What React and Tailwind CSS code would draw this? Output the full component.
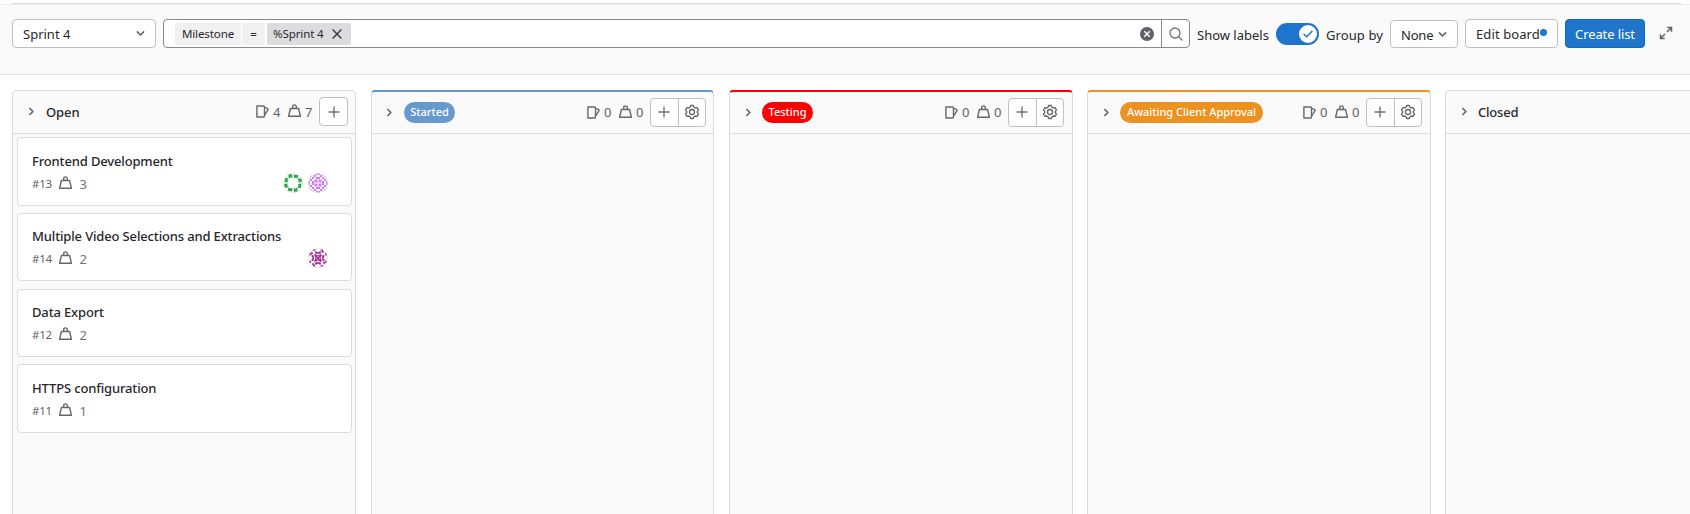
const Chevron = ({ className }) => (
  <svg viewBox="0 0 10 10" className={className} fill="none" stroke="#626168" strokeWidth="1.400" strokeLinecap="round" strokeLinejoin="round">
    <path d="M2.200 3.500 5 6.300 7.800 3.500" />
  </svg>
);

const Issues = () => (
  <svg viewBox="0 0 13 13" className="h-[13px] w-[13px] shrink-0" fill="none" stroke="#68676e" strokeWidth="1.400" strokeLinejoin="round">
    <path d="M.9 1h6.600q1 0 1 1v9q0 1-1 1H.9z" />
    <path d="M8.500 2.400 11.300 3.300Q12.400 3.800 12 4.700L8.700 9.800" />
  </svg>
);

const Weight = () => (
  <svg viewBox="0 0 13 13" className="h-[13px] w-[13px] shrink-0 -translate-y-px" fill="none" stroke="#68676e" strokeWidth="1.400" strokeLinejoin="round">
    <path d="M2.400 4.500h8.200l1.800 7.800H.6z" />
    <path d="M4.700 4.400V2.700q0-1.800 1.800-1.800t1.800 1.800v1.700" />
  </svg>
);

const Plus = () => (
  <svg viewBox="0 0 12 12" className="h-3 w-3" fill="none" stroke="#737278" strokeWidth="1.400">
    <path d="M6 .5v11M.5 6h11" />
  </svg>
);

const Gear = () => (
  <svg viewBox="0 0 16 16" className="h-4 w-4" fill="none" stroke="#626168" strokeWidth="1.300" strokeLinejoin="round">
    <path d="M6.700 1.500h2.600l.7 1.700 1.300.8 1.900-.3 1.300 2.300-1.200 1.400v1.200l1.200 1.400-1.300 2.300-1.900-.3-1.300.8-.7 1.700H6.700L6 12.800 4.700 12l-1.900.3L1.500 10l1.200-1.400V7.400L1.500 6l1.300-2.300 1.900.3L6 3.200z" />
    <circle cx="8" cy="8" r="2.500" />
  </svg>
);

const Green = () => (
  <svg viewBox="0 0 20 20" className="h-5 w-5 rounded-full bg-white">
    <g fill="#2da44e">
      {[0, 90, 180, 270].map((a) => (
        <path key={a} transform={`rotate(${a} 10 10)`} d="M5.200 1 9 .8 9.600 5 7.800 4.200 5.800 5.800zM10.600 1.500 15 2 14.800 5.600 13 4.400 10.900 5.200z" />
      ))}
    </g>
    <circle cx="10" cy="10" r="9.500" fill="none" stroke="#dedede" />
  </svg>
);

const dots = [];
for (let r = 0; r < 10; r++) {
  for (let c = 0; c < 10; c++) {
    const inner = r > 2 && r < 7 && c > 2 && c < 7;
    if (!inner && (Math.min(r, 9 - r) + Math.min(c, 9 - c)) % 2 === 0) dots.push([c * 2, r * 2]);
  }
}

const Violet = () => (
  <svg viewBox="0 0 20 20" className="h-5 w-5 rounded-full bg-white" fill="#cf7cf5">
    {dots.map(([x, y]) => <rect key={x + "-" + y} x={x} y={y} width="2" height="2" />)}
    <path d="M6.500 6.500h3v3h-3zM10.500 6.500h3v3h-3zM6.500 10.500h3v3h-3zM10.500 10.500h3v3h-3z" />
    <circle cx="10" cy="10" r="9.500" fill="none" stroke="#dedede" />
  </svg>
);

const Purple = () => (
  <svg viewBox="0 0 20 20" className="h-5 w-5 rounded-full bg-white">
    <g fill="#a3248f">
      {[0, 90, 180, 270].map((a) => (
        <path key={a} transform={`rotate(${a} 10 10)`} d="M4.500 1.200 7.400.8 7.400 2.600 5 3.200zM12.600.8 15.500 1.200 15 3.200 12.600 2.600zM6.500 3.600 8.600 3.600 10 4.600 11.400 3.600 13.500 3.600 12.300 5.800H7.700zM6.300 6.300h2l1 2v1h-1l-2-1zM2.800 4.300h2v2h-2zM9.300 7h1.400v1.500H9.300z" />
      ))}
      <path d="M9 9h2v2H9z" />
    </g>
    <circle cx="10" cy="10" r="9.500" fill="none" stroke="#dedede" />
  </svg>
);

const lists = [
  { name: "Started", col: "ml-[15px] w-[343px]", pad: "pr-[7px] pl-3", bar: "border-t-[#6699cc]", pill: "w-[51px] bg-[#6699cc]" },
  { name: "Testing", col: "ml-[15px] w-[344px]", pad: "pr-2 pl-[13px]", bar: "border-t-[#ff0000]", pill: "-ml-px w-[51px] bg-[#ff0000]" },
  { name: "Awaiting Client Approval", col: "ml-[14px] w-[344px]", pad: "pr-2 pl-[13px]", bar: "border-t-[#ed9121]", pill: "-ml-px w-[143px] bg-[#ed9121]" },
];

const cards = [
  { title: "Frontend Development", id: "#13", weight: 3, box: "h-[69px] pt-[14px]", people: [Green, Violet] },
  { title: "Multiple Video Selections and Extractions", id: "#14", weight: 2, box: "mt-[7px] h-[68px] pt-[13px]", people: [Purple] },
  { title: "Data Export", id: "#12", weight: 2, box: "mt-2 h-[68px] pt-[13px]", people: [] },
  { title: "HTTPS configuration", id: "#11", weight: 1, box: "mt-[7px] h-[69px] pt-[14px]", people: [] },
];

const Counts = ({ issues, weight }) => (
  <div className="ml-auto flex items-center text-[13px] font-normal text-[#626168]">
    <Issues />
    <span className="ml-1 w-[15px]">{issues}</span>
    <Weight />
    <span className="ml-1 w-[14px]">{weight}</span>
  </div>
);

export default function App() {
  return (
    <div className="flex h-[514px] w-[1690px] flex-col overflow-hidden bg-white pt-[3px] font-['Noto_Sans',sans-serif] text-[13px] leading-[18px] text-[#28272d]">
      <div className="mr-[9px] ml-3 h-px shrink-0 bg-[#d9d9db]" />
      <header className="flex h-[71px] shrink-0 items-start border-t border-b border-t-[#ececef] border-b-[#e4e4e6] bg-[#fafafa] pt-[14px] pl-3 whitespace-nowrap">
        <div className="flex h-[29px] w-36 items-center justify-between rounded border border-[#bfbfc3] bg-white pr-[9px] pl-[10px]">
          <span className="pt-px">Sprint 4</span>
          <Chevron className="h-[11px] w-[11px]" />
        </div>
        <div className="ml-[7px] flex h-[29px] w-[1027px] rounded border border-[#89888d] bg-white">
          <div className="flex flex-1 items-center pl-[11px] text-[11.5px] tracking-[-0.1px]">
            <span className="flex h-[22px] w-[66px] items-center justify-center rounded-l-xs bg-[#f0f0f0]">Milestone</span>
            <span className="ml-px flex h-[22px] w-[23px] items-center justify-center bg-[#f0f0f0]">=</span>
            <span className="ml-[2px] flex h-[22px] w-[84px] items-center justify-between rounded-r-xs bg-[#dcdcde] pr-[9px] pl-[6px]">
              %Sprint 4
              <svg viewBox="0 0 10 10" className="h-[10px] w-[10px]" stroke="#3a383f" strokeWidth="1.400"><path d="M.6.6l8.800 8.800M9.400.6.600 9.400" /></svg>
            </span>
            <svg viewBox="0 0 14 14" className="mr-[7px] ml-auto h-[14px] w-[14px]">
              <circle cx="7" cy="7" r="7" fill="#626168" />
              <path d="M4.300 4.300l5.400 5.400M9.700 4.300 4.300 9.700" stroke="#fff" strokeWidth="1.500" />
            </svg>
          </div>
          <div className="flex w-7 items-center justify-center border-l border-[#89888d]">
            <svg viewBox="0 0 14 14" className="h-[14px] w-[14px]" fill="none" stroke="#737278" strokeWidth="1.300" strokeLinecap="round"><circle cx="6" cy="6" r="5" /><path d="M9.800 9.800 13 13" /></svg>
          </div>
        </div>
        <span className="mt-[7px] ml-[7px] w-[72px]">Show labels</span>
        <div className="mt-1 ml-[7px] flex h-[22px] w-[43px] items-center justify-end rounded-full bg-[#1f75cb] pr-[2px]">
          <div className="flex h-[18px] w-[18px] items-center justify-center rounded-full bg-white">
            <svg viewBox="0 0 10 8" className="h-2 w-[10px]" fill="none" stroke="#1f75cb" strokeWidth="1.500" strokeLinecap="round"><path d="M1 4.200 3.700 6.800 9 1.200" /></svg>
          </div>
        </div>
        <span className="mt-[7px] ml-[7px] w-[57px] tracking-[0.1px]">Group by</span>
        <div className="mt-px ml-[7px] flex h-7 w-[68px] items-center justify-between rounded border border-[#bfbfc3] bg-white pr-[9px] pl-[10px] tracking-[-0.2px]">
          <span className="pt-px">None</span>
          <Chevron className="h-[11px] w-[11px]" />
        </div>
        <div className="ml-[7px] flex h-[29px] w-[93px] items-center rounded border border-[#bfbfc3] bg-white pl-[10px] tracking-[0.1px]">
          <span className="w-[64px]">Edit board</span>
          <span className="mb-[2px] h-[7px] w-[7px] rounded-full bg-[#1f75cb]" />
        </div>
        <div className="ml-[7px] flex h-[29px] w-20 items-center justify-center rounded border border-[#1068bf] bg-[#1f75cb] pt-px tracking-[-0.1px] text-white">Create list</div>
        <svg viewBox="0 0 14 14" className="mt-[7px] ml-[14px] h-[14px] w-[14px]" fill="none" stroke="#626168" strokeWidth="1.500">
          <path d="M8.300 1.500h4.200v4.200M12.300 1.700 8 6M1.500 8.300v4.200h4.200M1.700 12.300 6 8" />
        </svg>
      </header>

      <main className="flex min-h-0 flex-1 pt-[15px] pl-3 whitespace-nowrap">
        <section className="flex h-[440px] w-[344px] shrink-0 flex-col rounded-t border border-[#dcdcde] bg-[#fafafa]">
          <div className="flex h-[43px] shrink-0 items-center border-b border-[#dcdcde] pr-[7px] pb-px pl-[13px] font-medium">
            <Chevron className="h-[11px] w-[11px] -rotate-90" />
            <span className="ml-[9px] tracking-[-0.1px]">Open</span>
            <Counts issues={4} weight={7} />
            <div className="flex h-[29px] w-[29px] items-center justify-center rounded border border-[#bfbfc3] bg-white"><Plus /></div>
          </div>
          <div className="flex flex-col pt-[3px] pr-[3px] pl-1">
            {cards.map((c) => (
              <article key={c.id} className={"flex flex-col rounded border border-[#dcdcde] bg-white pr-[23px] pl-[14px] " + c.box}>
                <h4 className="h-[18px] font-medium tracking-[-0.150px]">{c.title}</h4>
                <div className="mt-[3px] flex h-5 items-center text-[#626168]">
                  <span className="w-[26.5px] pt-px text-[11.5px] tracking-[-0.3px]">{c.id}</span>
                  <Weight />
                  <span className="ml-2 pt-px text-[13px] text-[#737278]">{c.weight}</span>
                  <div className="ml-auto flex gap-[5px]">{c.people.map((P, i) => <P key={i} />)}</div>
                </div>
              </article>
            ))}
          </div>
        </section>

        {lists.map((l) => (
          <section key={l.name} className={"h-[440px] shrink-0 rounded-t border border-t-2 border-[#dcdcde] bg-[#fafafa] " + l.col + " " + l.bar}>
            <div className={"flex h-[42px] items-center border-b border-[#dcdcde] pb-px " + l.pad}>
              <Chevron className="h-[11px] w-[11px] -rotate-90" />
              <div className="ml-[9px]">
                <span className={"flex h-[21px] items-center justify-center rounded-full text-[11px] font-medium text-white " + l.pill}>{l.name}</span>
              </div>
              <Counts issues={0} weight={0} />
              <div className="flex h-[29px] w-14 rounded border border-[#bfbfc3] bg-white">
                <span className="flex flex-1 items-center justify-center border-r border-[#bfbfc3]"><Plus /></span>
                <span className="flex flex-1 items-center justify-center"><Gear /></span>
              </div>
            </div>
          </section>
        ))}

        <section className="ml-[14px] h-[440px] w-[344px] shrink-0 rounded-t border border-[#dcdcde] bg-[#fafafa]">
          <div className="flex h-[43px] items-center border-b border-[#dcdcde] pb-px pl-[13px] font-medium">
            <Chevron className="h-[11px] w-[11px] -rotate-90" />
            <span className="ml-2 tracking-[-0.2px]">Closed</span>
          </div>
        </section>
      </main>
    </div>
  );
}
